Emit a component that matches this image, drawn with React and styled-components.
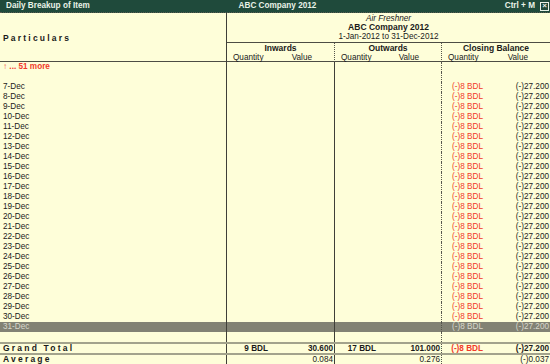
import React from "react";
import styled, { createGlobalStyle } from "styled-components";

const GlobalStyle = createGlobalStyle`
  html, body {
    margin: 0;
    padding: 0;
    background: #fefed9;
  }
  body {
    font-family: "Liberation Sans", Arial, sans-serif;
    font-size: 8.2px;
    color: #1a1a1a;
  }
`;

const days = [];
for (let d = 7; d <= 31; d++) days.push(`${d}-Dec`);

export default function App() {
  return (
    <>
      <GlobalStyle />
      <Screen>
        <TitleBar>
          <TitleLeft>Daily Breakup of Item</TitleLeft>
          <TitleCenter>ABC Company 2012</TitleCenter>
          <TitleRight>
            Ctrl + M <CloseBox>×</CloseBox>
          </TitleRight>
        </TitleBar>

        <Header>
          <ParticularsHead>Particulars</ParticularsHead>
          <HeadRight>
            <ItemInfo>
              <ItemName>Air Freshner</ItemName>
              <Company>ABC Company 2012</Company>
              <div>1-Jan-2012 to 31-Dec-2012</div>
            </ItemInfo>
            <ColHeads>
              {["Inwards", "Outwards", "Closing Balance"].map((c, i) => (
                <ColHead key={c} $dotted={i === 2}>
                  <ColTitle>{c}</ColTitle>
                  <SubHeads>
                    <span>Quantity</span>
                    <span>Value</span>
                  </SubHeads>
                </ColHead>
              ))}
            </ColHeads>
          </HeadRight>
        </Header>

        <Row>
          <MoreCell>↑ ... 51 more</MoreCell>
          <Cell />
          <Cell />
          <Cell $dotted />
        </Row>
        <Row>
          <NameCell />
          <Cell />
          <Cell />
          <Cell $dotted />
        </Row>

        {days.map((d) => {
          const sel = d === "31-Dec";
          return (
            <Row key={d} $selected={sel}>
              <NameCell>{d}</NameCell>
              <Cell />
              <Cell />
              <Cell $dotted>
                <Qty $red={!sel}>(-)8 BDL</Qty>
                <Val>(-)27.200</Val>
              </Cell>
            </Row>
          );
        })}

        <Row>
          <NameCell />
          <Cell />
          <Cell />
          <Cell $dotted />
        </Row>

        <TotalRow>
          <SpacedName>Grand Total</SpacedName>
          <Cell>
            <Qty>9 BDL</Qty>
            <Val>30.600</Val>
          </Cell>
          <Cell>
            <Qty>17 BDL</Qty>
            <Val>101.000</Val>
          </Cell>
          <Cell $dotted>
            <Qty $red>(-)8 BDL</Qty>
            <Val>(-)27.200</Val>
          </Cell>
        </TotalRow>

        <AvgRow>
          <SpacedName>Average</SpacedName>
          <Cell>
            <Val>0.084</Val>
          </Cell>
          <Cell>
            <Val>0.276</Val>
          </Cell>
          <Cell $dotted>
            <Val>(-)0.037</Val>
          </Cell>
        </AvgRow>
      </Screen>
    </>
  );
}

const Screen = styled.div`
  width: 550px;
  height: 364px;
  overflow: hidden;
  background: #fefed9;
`;

const TitleBar = styled.div`
  height: 12px;
  background: #1f4a3b;
  color: #e8f2e8;
  font-weight: bold;
  font-size: 8.2px;
  line-height: 12px;
  display: grid;
  grid-template-columns: 1fr auto 1fr;
  padding: 0 1px 0 6px;
  border-bottom: 1px dotted #5a5a50;
`;

const TitleLeft = styled.div``;

const TitleCenter = styled.div`
  text-align: center;
`;

const TitleRight = styled.div`
  display: flex;
  justify-content: flex-end;
  align-items: center;
  gap: 5px;
`;

const CloseBox = styled.span`
  width: 7px;
  height: 7px;
  border: 1px solid #e8f2e8;
  font-size: 8px;
  line-height: 6px;
  text-align: center;
  display: inline-block;
`;

const Header = styled.div`
  display: grid;
  grid-template-columns: 226px 1fr;
  height: 48px;
  border-bottom: 1px solid #4d4d44;
`;

const ParticularsHead = styled.div`
  font-weight: bold;
  font-size: 8.5px;
  letter-spacing: 2.2px;
  display: flex;
  align-items: center;
  padding-left: 3px;
`;

const HeadRight = styled.div`
  border-left: 1px solid #3f3f38;
  display: flex;
  flex-direction: column;
`;

const ItemInfo = styled.div`
  height: 28px;
  padding-top: 1px;
  line-height: 9px;
  text-align: center;
  border-bottom: 1px solid #4d4d44;
`;

const ItemName = styled.div`
  font-style: italic;
`;

const Company = styled.div`
  font-weight: bold;
  font-size: 8.5px;
`;

const ColHeads = styled.div`
  display: grid;
  grid-template-columns: 107px 107px 1fr;
  flex: 1;
`;

const ColHead = styled.div`
  line-height: 9px;
  padding-top: 1px;
  & + & {
    border-left: 1px ${(p) => (p.$dotted ? "dotted #55554c" : "solid #3f3f38")};
  }
`;

const ColTitle = styled.div`
  font-weight: bold;
  font-size: 8.5px;
  text-align: center;
`;

const SubHeads = styled.div`
  display: flex;
  justify-content: space-between;
  padding: 0 22px 0 6px;
`;

const Row = styled.div`
  display: grid;
  grid-template-columns: 226px 108px 107px 1fr;
  height: 10px;
  line-height: 10px;
  background: ${(p) => (p.$selected ? "#828274" : "transparent")};
  color: ${(p) => (p.$selected ? "#d8d8cc" : "#1a1a1a")};
`;

const TotalRow = styled(Row)`
  height: 9px;
  line-height: 9px;
  font-weight: bold;
  border-top: 2px solid #a3a38c;
  border-bottom: 2px solid #a3a38c;
`;

const AvgRow = styled(Row)`
  height: 9px;
  line-height: 9px;
`;

const NameCell = styled.div`
  padding-left: 3px;
  white-space: nowrap;
`;

const MoreCell = styled(NameCell)`
  color: #f23a2a;
  font-weight: bold;
`;

const SpacedName = styled(NameCell)`
  font-weight: bold;
  font-size: 8.5px;
  letter-spacing: 2.2px;
`;

const Cell = styled.div`
  border-left: 1px ${(p) => (p.$dotted ? "dotted #55554c" : "solid #3f3f38")};
  display: grid;
  grid-template-columns: 41px 1fr;
  white-space: nowrap;
`;

const Qty = styled.span`
  text-align: right;
  color: ${(p) => (p.$red ? "#f23a2a" : "inherit")};
`;

const Val = styled.span`
  grid-column: 2;
  text-align: right;
  padding-right: 1px;
`;
